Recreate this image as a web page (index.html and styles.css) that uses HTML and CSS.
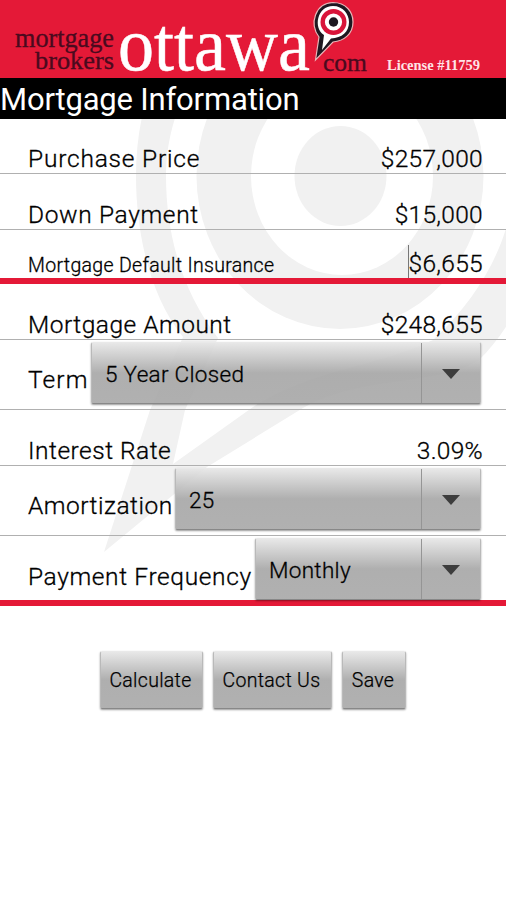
FILE: index.html
```html
<!DOCTYPE html>
<html lang="en">
<head>
<meta charset="utf-8">
<title>Mortgage Information</title>
<link rel="stylesheet" href="styles.css">
</head>
<body>
<header class="brand">
  <svg width="506" height="78" viewBox="0 0 506 78" font-family="'Liberation Serif', serif">
    <g fill="#4a0a1e" stroke="#4a0a1e" stroke-width=".3">
      <text x="15" y="47" font-size="26.500" textLength="99" lengthAdjust="spacingAndGlyphs">mortgage</text>
      <text x="35" y="69" font-size="26" textLength="79" lengthAdjust="spacingAndGlyphs">brokers</text>
      <text x="323" y="71" font-size="25" textLength="44" lengthAdjust="spacingAndGlyphs">com</text>
    </g>
    <text x="118" y="69.500" font-size="77" fill="#fff" stroke="#fff" stroke-width=".5" textLength="192" lengthAdjust="spacingAndGlyphs">ottawa</text>
    <path d="M315.500 60 L319 37 C309 24 315 3 333 2.500 C346 2.500 353 12 353 22 C353 34 344 41 333 42 Z" fill="#1d1720" stroke="#e9b5b8" stroke-width="1.200"/>
    <path d="M322 50 L324 35 C313 28 317 6 333 6 C343 6 349 14 349 22 C349 32 342 38 331 38.500 Z" fill="#fff"/>
    <circle cx="333.500" cy="22" r="13" fill="#d9143a"/>
    <circle cx="333.500" cy="22" r="8.600" fill="#fff"/>
    <circle cx="333.500" cy="22" r="4.700" fill="#1d1720"/>
    <text x="387" y="70" font-size="14" font-weight="bold" fill="#ffe3e7" textLength="93" lengthAdjust="spacingAndGlyphs">License #11759</text>
  </svg>
</header>
<h1 class="title">Mortgage Information</h1>
<main class="form">
  <svg class="watermark" width="506" height="481" viewBox="0 119 506 481">
    <path d="M136 176 C136 30 235 -43 340 -43 C450 -43 544 55 544 176 C544 260 520 320 478 361 C430 387 360 375 303 408 L207 467 L104 552 L150 410 L183 337 C151 298 136 235 136 176Z" fill="#f1f1f1"/>
    <path d="M166 176 C166 80 240 -11 340 -11 C440 -11 514 75 514 176 C514 225 492 285 433 340 C380 366 310 370 253 407 L173 464 L185 410 L218 338 C185 295 166 240 166 176Z" fill="#fff"/>
    <ellipse cx="340" cy="176" rx="143.500" ry="153" fill="#f1f1f1"/>
    <ellipse cx="342" cy="176" rx="91" ry="99" fill="#fff"/>
    <ellipse cx="340.500" cy="176" rx="46" ry="50" fill="#f1f1f1"/>
  </svg>
  <div class="row"><span class="label l-price">Purchase Price</span><span class="value">$257,000</span></div>
  <div class="row"><span class="label l-down">Down Payment</span><span class="value">$15,000</span></div>
  <div class="row last insurance"><span class="label small">Mortgage Default Insurance</span><span class="value caret">$6,655</span></div>
  <div class="row"><span class="label l-amount">Mortgage Amount</span><span class="value">$248,655</span></div>
  <div class="row tall"><span class="label l-term">Term</span><div class="select s-term"><span>5 Year Closed</span><i class="drop"></i></div></div>
  <div class="row"><span class="label l-rate">Interest Rate</span><span class="value">3.09%</span></div>
  <div class="row tall"><span class="label l-amort">Amortization</span><div class="select s-amort"><span>25</span><i class="drop"></i></div></div>
  <div class="row tall last"><span class="label l-freq">Payment Frequency</span><div class="select s-freq"><span>Monthly</span><i class="drop"></i></div></div>
</main>
<div class="actions">
  <button class="btn b-calc">Calculate</button>
  <button class="btn b-contact">Contact Us</button>
  <button class="btn b-save">Save</button>
</div>
</body>
</html>
```

FILE: styles.css
```css
* { box-sizing: border-box; }
body {
  margin: 0;
  width: 506px;
  height: 900px;
  overflow: hidden;
  background: #fff;
  color: #000;
  font-family: Roboto, sans-serif;
  font-weight: 350;
}
.brand { height: 78px; background: #e41937; }
.brand svg { display: block; }
.title {
  margin: 0;
  height: 41px;
  background: #000;
  color: #fff;
  font-size: 31px;
  font-weight: 400;
  line-height: 43px;
  letter-spacing: -.18px;
  white-space: nowrap;
}
.form { position: relative; -webkit-text-stroke: .3px #000; }
.watermark { position: absolute; left: 0; top: 0; }
.row {
  position: relative;
  display: flex;
  align-items: flex-end;
  height: 56px;
  padding: 0 23px 0 28px;
  border-bottom: 1px solid #b0b0b0;
  font-size: 24.500px;
  line-height: 29px;
  white-space: nowrap;
  letter-spacing: .65px;
}
.row:first-of-type { height: 55px; }
.label { flex: none; }
.l-price { letter-spacing: .8px; }
.l-amount, .l-rate, .l-amort { letter-spacing: .5px; }
.l-freq { letter-spacing: .63px; }
.l-term { letter-spacing: 1.1px; }
.value { margin-left: auto; letter-spacing: .3px; }
.row.last { border-bottom: 6px solid #e41937; }
.row.insurance { height: 54px; }
.small { font-size: 19.500px; line-height: 24px; letter-spacing: .32px; }
.caret { border-left: 1px solid #777; line-height: 37px; height: 33px; }
.row.tall { height: 70px; padding-right: 25px; }
.row.tall .label { padding-bottom: 15px; }
.row.tall.last { padding-bottom: 0; }
.row.tall.last .label { padding-bottom: 9px; }
.select {
  display: flex;
  justify-content: space-between;
  height: 62px;
  margin: 0 0 5px auto;
  padding-left: 13px;
  font-size: 22.500px;
  line-height: 62px;
  letter-spacing: .3px;
}
.row.last .select { margin-bottom: 0; }
.select, .btn {
  border: 1px solid #b9b9b9;
  border-top-color: #e9e9e9;
  border-bottom-color: #888;
  border-radius: 2px;
  background: linear-gradient(rgba(229,229,229,.9), rgba(166,166,166,.9) 50%, rgba(168,168,168,.9));
  box-shadow: 0 1px 2px rgba(0,0,0,.4);
}
.s-term { width: 390px; }
.s-amort { width: 306px; }
.s-freq { width: 226px; }
.drop {
  display: flex;
  align-items: center;
  justify-content: center;
  width: 59px;
  padding-top: 1px;
  border-left: 1px solid #959595;
}
.drop::before {
  content: "";
  border: 9px solid transparent;
  border-top: 10px solid #3d3d3d;
  border-bottom: 0;
}
.actions { display: flex; gap: 10px; margin: 45px 0 0 99.500px; }
.btn {
  height: 58px;
  padding: 0 1px 0 0;
  font: 350 19.500px Roboto, sans-serif;
  -webkit-text-stroke: .25px #000;
  letter-spacing: .3px;
  color: #000;
}
.b-calc { width: 103px; }
.b-contact { width: 119px; }
.b-save { width: 64px; }
```
